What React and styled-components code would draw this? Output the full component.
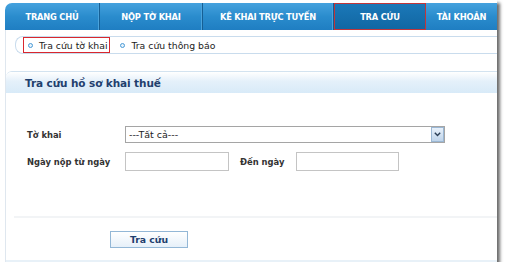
import React from "react";
import styled, { createGlobalStyle } from "styled-components";

const Global = createGlobalStyle`
  html, body { margin: 0; padding: 0; background: #ffffff; }
  body { font-family: "DejaVu Sans", Verdana, sans-serif; }
  * { box-sizing: border-box; }
`;

const Frame = styled.div`
  width: 497px;
  height: 262px;
  background: #fff;
  box-shadow: 3px 3px 3px rgba(60, 60, 60, 0.75);
  display: flex;
  flex-direction: column;
  padding-top: 3px;
`;

const Nav = styled.div`
  margin-left: 5px;
  height: 27px;
  display: flex;
  border-top-left-radius: 7px;
  overflow: hidden;
  background: linear-gradient(#45a2de 0%, #2a8ccd 50%, #1f7ec2 100%);
`;

const Tab = styled.div`
  width: ${(p) => p.w}px;
  display: flex;
  align-items: center;
  justify-content: center;
  color: #fff;
  font-family: "DejaVu Sans", sans-serif;
  font-weight: bold;
  font-size: 8.3px;
  letter-spacing: -0.2px;
  border-right: ${(p) => (p.last ? "none" : "1px solid #165f94")};
  box-shadow: ${(p) => (p.last ? "none" : "inset -1px 0 0 #4aa3dc")};
  ${(p) =>
    p.active &&
    `background: linear-gradient(#1b78b8, #1167a3);
     border: 1px solid #c0353a;
     box-shadow: none;`}
`;

const Content = styled.div`
  flex: 1;
  margin-left: 5px;
  border-left: 1px solid #dfe7ef;
  display: flex;
  flex-direction: column;
`;

const SubNav = styled.div`
  margin: 6px 0 0 9px;
  height: 18px;
  border: 1px solid #c9dced;
  border-right: none;
  border-radius: 8px 0 0 8px;
  display: flex;
  align-items: center;
  padding-left: 7px;
  gap: 5px;
`;

const SubItem = styled.div`
  display: flex;
  align-items: center;
  gap: 6px;
  height: 16px;
  padding: 0 2px 0 4px;
  font-family: "DejaVu Sans", sans-serif;
  font-size: 9.3px;
  color: #222;
  border: 1px solid ${(p) => (p.active ? "#d9272e" : "transparent")};
`;

const Bullet = styled.span`
  width: 5px;
  height: 5px;
  border-radius: 50%;
  border: 1.5px solid #4b9bd6;
  background: #e6f2fb;
`;

const Panel = styled.div`
  margin-top: 17px;
  flex: 1;
  display: flex;
  flex-direction: column;
  border-top-left-radius: 6px;
  border-top: 1px solid #d3e3f0;
  border-bottom: 2px solid #e8f1f8;
`;

const PanelHeader = styled.div`
  height: 21px;
  border-top-left-radius: 6px;
  background: linear-gradient(#ffffff 0%, #e4f0fa 45%, #d8eaf8 100%);
  display: flex;
  align-items: center;
  padding-left: 19px;
  font-family: "DejaVu Sans", sans-serif;
  font-weight: bold;
  font-size: 10.5px;
  color: #1f3f6e;
  letter-spacing: -0.1px;
`;

const Form = styled.div`
  padding: 33px 0 0 21px;
  display: flex;
  flex-direction: column;
  gap: 9px;
`;

const Row = styled.div`
  display: flex;
  align-items: center;
`;

const Label = styled.div`
  width: ${(p) => p.w}px;
  padding-left: ${(p) => p.pad || 0}px;
  font-family: "DejaVu Sans", sans-serif;
  font-weight: bold;
  font-size: 8.4px;
  color: #333;
`;

const Select = styled.div`
  width: 320px;
  height: 17px;
  border: 1px solid #a5a5a5;
  display: flex;
  align-items: center;
  justify-content: space-between;
  padding-left: 3px;
  font-family: "DejaVu Sans", sans-serif;
  font-size: 9.5px;
  color: #222;
`;

const Arrow = styled.div`
  width: 13px;
  height: 15px;
  border: 1px solid #9ab7d4;
  background: linear-gradient(#e8f1fb, #bfd4ea);
  display: flex;
  align-items: center;
  justify-content: center;
`;

const Input = styled.div`
  width: ${(p) => p.w}px;
  height: 19px;
  border: 1px solid #c4c4c4;
  background: #fff;
`;

const Divider = styled.div`
  margin: 45px 0 0 8px;
  height: 2px;
  background: #f2f4f6;
`;

const ButtonRow = styled.div`
  display: flex;
  padding: 13px 0 0 104px;
`;

const Button = styled.div`
  width: 78px;
  height: 17px;
  border: 1px solid #93b7d6;
  background: linear-gradient(#ffffff, #e6f0f9);
  display: flex;
  align-items: center;
  justify-content: center;
  font-family: "DejaVu Sans", sans-serif;
  font-weight: bold;
  font-size: 9.3px;
  color: #1f3f6e;
`;

export default function App() {
  return (
    <>
      <Global />
      <Frame>
        <Nav>
          <Tab w={95}>TRANG CHỦ</Tab>
          <Tab w={103}>NỘP TỜ KHAI</Tab>
          <Tab w={131}>KÊ KHAI TRỰC TUYẾN</Tab>
          <Tab w={92} active>TRA CỨU</Tab>
          <Tab w={71} last>TÀI KHOẢN</Tab>
        </Nav>
        <Content>
          <SubNav>
            <SubItem active>
              <Bullet />
              Tra cứu tờ khai
            </SubItem>
            <SubItem>
              <Bullet />
              Tra cứu thông báo
            </SubItem>
          </SubNav>
          <Panel>
            <PanelHeader>Tra cứu hồ sơ khai thuế</PanelHeader>
            <Form>
              <Row>
                <Label w={98}>Tờ khai</Label>
                <Select>
                  ---Tất cả---
                  <Arrow>
                    <svg width="7" height="5" viewBox="0 0 7 5">
                      <path d="M0.8 0.8 L3.5 3.6 L6.2 0.8" fill="none" stroke="#2b3e55" strokeWidth="1.4" />
                    </svg>
                  </Arrow>
                </Select>
              </Row>
              <Row>
                <Label w={98}>Ngày nộp từ ngày</Label>
                <Input w={104} />
                <Label w={67} pad={11}>Đến ngày</Label>
                <Input w={103} />
              </Row>
            </Form>
            <Divider />
            <ButtonRow>
              <Button>Tra cứu</Button>
            </ButtonRow>
          </Panel>
        </Content>
      </Frame>
    </>
  );
}
